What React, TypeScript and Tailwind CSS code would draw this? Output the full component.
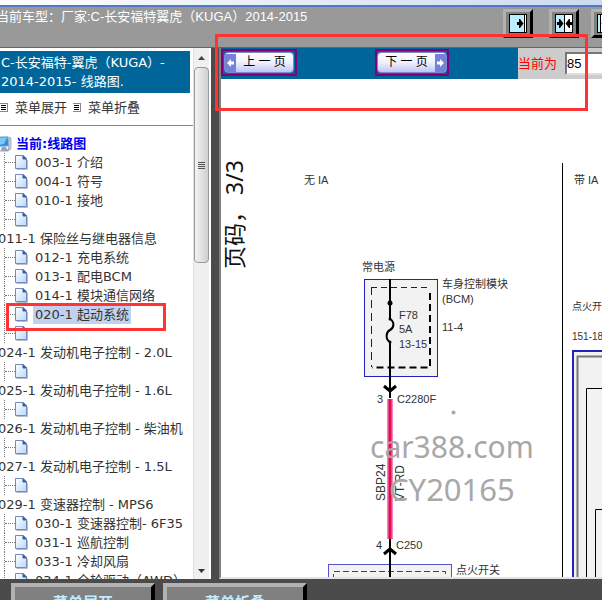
import { useState } from 'react';

interface TreeRow {
  id: string;
  kind: 'page' | 'group';
  label: string;
}

const rows: TreeRow[] = [
  { id: 'p003', kind: 'page', label: '003-1 介绍' },
  { id: 'p004', kind: 'page', label: '004-1 符号' },
  { id: 'p010', kind: 'page', label: '010-1 接地' },
  { id: 'e1', kind: 'page', label: '' },
  { id: 'g011', kind: 'group', label: '011-1 保险丝与继电器信息' },
  { id: 'p012', kind: 'page', label: '012-1 充电系统' },
  { id: 'p013', kind: 'page', label: '013-1 配电BCM' },
  { id: 'p014', kind: 'page', label: '014-1 模块通信网络' },
  { id: 'p020', kind: 'page', label: '020-1 起动系统' },
  { id: 'e2', kind: 'page', label: '' },
  { id: 'g024', kind: 'group', label: '024-1 发动机电子控制 - 2.0L' },
  { id: 'e3', kind: 'page', label: '' },
  { id: 'g025', kind: 'group', label: '025-1 发动机电子控制 - 1.6L' },
  { id: 'e4', kind: 'page', label: '' },
  { id: 'g026', kind: 'group', label: '026-1 发动机电子控制 - 柴油机' },
  { id: 'e5', kind: 'page', label: '' },
  { id: 'g027', kind: 'group', label: '027-1 发动机电子控制 - 1.5L' },
  { id: 'e6', kind: 'page', label: '' },
  { id: 'g029', kind: 'group', label: '029-1 变速器控制 - MPS6' },
  { id: 'p030', kind: 'page', label: '030-1 变速器控制- 6F35' },
  { id: 'p031', kind: 'page', label: '031-1 巡航控制' },
  { id: 'p033', kind: 'page', label: '033-1 冷却风扇' },
  { id: 'p034', kind: 'page', label: '034-1 全轮驱动（AWD）' },
];

function PageIcon() {
  return (
    <svg width="13" height="15" viewBox="0 0 13 15" className="shrink-0">
      <defs>
        <linearGradient id="paper" x1="0" y1="0" x2="1" y2="1">
          <stop offset="0" stopColor="#ffffff" />
          <stop offset="1" stopColor="#b9d8fb" />
        </linearGradient>
      </defs>
      <path d="M1.5 14.5H12.500V5" fill="none" stroke="#b8bcc8" />
      <path d="M0.500 0.500H8L11.500 4V13.500H0.500Z" fill="url(#paper)" stroke="#7189bd" />
      <path d="M8 0.500V4H11.500Z" fill="#3d5f9e" stroke="#3d5f9e" />
    </svg>
  );
}

function ComputerIcon() {
  return (
    <svg width="12" height="16" viewBox="0 0 12 16" className="shrink-0">
      <path d="M-2 1L8 0.500L9 10L-2 11Z" fill="#2f8fe0" stroke="#a8c4e0" />
      <path d="M-2 2L7 1.500L4 8L-2 9Z" fill="#7cc8fa" />
      <path d="M9 1L11 2V13L8.500 14V10Z" fill="#c5ccd8" stroke="#8c97ab" strokeWidth="0.6" />
      <path d="M2 11H6L7 13L10 13.500L8 15.500H0Z" fill="#9aa6b8" />
    </svg>
  );
}

function MenuMark() {
  return (
    <svg width="8" height="9" viewBox="1 0 8 9" className="shrink-0">
      <rect x="0.500" y="0.500" width="8" height="8" fill="#fff" stroke="#888" />
      <path d="M2 2.500H7M2 4.500H7M2 6.500H7" stroke="#000" />
    </svg>
  );
}

function PaneIcon({ kind }: { kind: 'right' | 'both' | 'left' }) {
  return (
    <svg width="18" height="19" viewBox="0 0 18 19" className="shrink-0">
      <rect x="0.500" y="0.500" width="17" height="18" fill="#fff" stroke="#000" />
      {kind === 'right' && (
        <>
          <rect x="1" y="1" width="14" height="17" fill="#bdeeff" />
          <path d="M15.500 1V18" stroke="#000" />
          <path d="M8 8H10V5H11L14.500 9.500L11 14H10V11H8Z" fill="#000" />
        </>
      )}
      {kind === 'both' && (
        <>
          <rect x="1" y="1" width="8" height="17" fill="#bdeeff" />
          <path d="M9.500 1V18" stroke="#000" />
          <path d="M2 8H4V5H5L8.500 9.500L5 14H4V11H2ZM17 8H15V5H14L10.500 9.500L14 14H15V11H17Z" fill="#000" />
        </>
      )}
      {kind === 'left' && (
        <>
          <rect x="1" y="1" width="2" height="17" fill="#bdeeff" />
          <path d="M3.500 1V18" stroke="#000" />
          <path d="M11 8H9V5H8L4.500 9.500L8 14H9V11H11Z" fill="#000" />
        </>
      )}
    </svg>
  );
}

function PaneButton({ kind, label }: { kind: 'right' | 'both' | 'left'; label: string }) {
  return (
    <button
      aria-label={label}
      className="flex h-[29px] w-[30px] shrink-0 items-center justify-center border-[3px] border-t-[#b2b2b2] border-r-black border-b-black border-l-[#b2b2b2] bg-[#808080]"
    >
      <PaneIcon kind={kind} />
    </button>
  );
}

function Arrow({ flip }: { flip?: boolean }) {
  return (
    <svg width="11" height="18" viewBox="0 0 11 18" className="shrink-0 bg-[#7480dc]">
      <path
        d={flip ? 'M2 7.500H5V5L9 9L5 13V10.500H2Z' : 'M9 7.500H6V5L2 9L6 13V10.500H9Z'}
        fill="#fff"
      />
    </svg>
  );
}

const pagerFace =
  'flex h-[21px] w-[70px] items-center overflow-hidden rounded-sm border border-[#8088cc] bg-gradient-to-b from-white via-[#eef0ff] to-[#c0c6f4]';

function Wiring() {
  return (
    <svg
      viewBox="221 79 381 498"
      preserveAspectRatio="xMinYMin slice"
      className="h-full w-full font-['Liberation_Sans','Noto_Sans_CJK_SC',sans-serif] text-[11px]"
      fill="#333"
    >
      <text transform="translate(243 269) rotate(-90)" fontSize="23" fill="#111" className="font-['Liberation_Serif','Noto_Sans_CJK_SC',serif]">
        页码，
      </text>
      <text transform="translate(243 195) rotate(-90)" fontSize="23" fill="#111" className="font-['Noto_Sans',sans-serif]">
        3/3
      </text>
      <text x="304" y="184">无 IA</text>
      <text x="574" y="184">带 IA</text>
      <path d="M562.500 163V577" stroke="#000" />

      {/* body control module */}
      <text x="362" y="271">常电源</text>
      <rect x="364.500" y="279.500" width="73" height="97" fill="#f2f2f2" stroke="#2222bb" />
      <path d="M371.500 287V367" stroke="#222" strokeDasharray="8 5" />
      <path d="M371 287.500H430" stroke="#222" strokeDasharray="6 4" />
      <path d="M430 293V367.500H372" fill="none" stroke="#000" strokeWidth="2" strokeDasharray="7 4" />
      <path d="M390 279V319C395 322 394 328 390 330C386 332 385 339 390 342V398" fill="none" stroke="#000" strokeWidth="2" />
      <circle cx="390" cy="303" r="2.500" fill="#000" />
      <circle cx="390" cy="319" r="1.500" fill="#000" />
      <circle cx="390" cy="342" r="1.500" fill="#000" />
      <text x="399" y="319">F78</text>
      <text x="399" y="333">5A</text>
      <text x="399" y="348">13-15</text>
      <text x="442" y="288">车身控制模块</text>
      <text x="442" y="303">(BCM)</text>
      <text x="442" y="331">11-4</text>
      <path d="M384 386L390 391L396 386" fill="none" stroke="#000" strokeWidth="3" />
      <text x="377" y="403">3</text>
      <text x="397" y="403">C2280F</text>

      {/* feed wire */}
      <path d="M390 399V539" stroke="#f77fc8" strokeWidth="6" />
      <path d="M390 399V539" stroke="#dd1144" strokeWidth="3" />
      <text transform="translate(385 501) rotate(-90)" fontSize="12">
        SBP24
      </text>
      <text transform="translate(404 501) rotate(-90)" fontSize="12">
        VT-RD
      </text>

      {/* ignition switch */}
      <text x="376" y="549">4</text>
      <text x="396" y="549">C250</text>
      <rect x="328.500" y="564.500" width="123" height="30" fill="#f2f2f2" stroke="#5555cc" />
      <path d="M333.500 580V571.500H445.500V580" fill="none" stroke="#444" strokeDasharray="6 3" />
      <path d="M390 539V577" stroke="#000" strokeWidth="2" />
      <path d="M384 554L390 549L396 554" fill="none" stroke="#000" strokeWidth="3" />
      <text x="456" y="574">点火开关</text>

      {/* variant with IA */}
      <text x="572" y="310" fontSize="10">点火开</text>
      <text x="572" y="340" fontSize="10">151-18</text>
      <rect x="573" y="351" width="80" height="260" fill="#f2f2f2" stroke="#2222bb" strokeWidth="2" />
      <path d="M577.500 600V356.500H610" fill="none" stroke="#777" strokeWidth="2" />
      <path d="M586.500 600V388.500H610" fill="none" stroke="#000" />
      <path d="M595.500 600V509.500H610" fill="none" stroke="#000" />

      <g fill="#a8a8a8" className="font-['Noto_Sans',sans-serif]">
        <circle cx="453.500" cy="412.500" r="2" />
        <text x="370" y="458" fontSize="30">car388.com</text>
        <text x="389" y="501" fontSize="31">CY20165</text>
      </g>
    </svg>
  );
}

function App() {
  const [selected, setSelected] = useState('p020');
  const [page, setPage] = useState('85');

  return (
    <div
      lang="zh-CN"
      className="relative flex h-screen flex-col overflow-hidden bg-[#4b4b4b] font-['DejaVu_Sans','Noto_Sans_CJK_SC',sans-serif] text-[13px] leading-[19px] text-[#333]"
    >
      <div className="h-[7px] shrink-0 border-b-2 border-[#5478c8] bg-gradient-to-r from-white to-[#cddaf0]" />
      <header className="flex h-[41px] shrink-0 border-b border-[#666] bg-[#999] font-['Liberation_Sans','Noto_Sans_CJK_SC',sans-serif] text-white">
        <h1 className="-ml-1 whitespace-nowrap">当前车型：厂家:C-长安福特翼虎（KUGA）2014-2015</h1>
        <div className="-mr-[19px] ml-auto flex shrink-0 pt-0.5">
          <PaneButton kind="right" label="隐藏菜单" />
          <div className="w-4 shrink-0" />
          <PaneButton kind="both" label="并排显示" />
          <div className="w-3 shrink-0" />
          <PaneButton kind="left" label="显示菜单" />
        </div>
      </header>

      <div className="flex min-h-0 flex-1">
        <aside className="flex w-[211px] shrink-0 bg-white pr-0.5">
          <div className="min-w-0 flex-1 overflow-hidden pt-[3px]">
            <h2 className="mr-[3px] bg-[#006699] px-px py-0.5 text-white">
              C-长安福特-翼虎（KUGA）- 2014-2015- 线路图.
            </h2>
            <div className="flex h-[33px] items-center border-b border-[#888] pb-1">
              <button className="flex items-center gap-[7px]">
                <MenuMark />
                菜单展开
              </button>
              <button className="ml-1.5 flex items-center gap-[7px]">
                <MenuMark />
                菜单折叠
              </button>
            </div>
            <div className="flex items-center gap-1 pt-2 font-bold text-[#0000ee]">
              <ComputerIcon />
              当前:线路图
            </div>
            <ul>
              {rows.map((row) =>
                row.kind === 'group' ? (
                  <li key={row.id} className="-ml-0.5 h-[19px] whitespace-nowrap">
                    <button>{row.label}</button>
                  </li>
                ) : (
                  <li key={row.id} className="relative ml-1 flex h-[19px] items-center border-l border-dotted border-[#777] whitespace-nowrap">
                    <span className="w-2.5 border-t border-dotted border-[#777]" />
                    <PageIcon />
                    {row.label && (
                      <button
                        onClick={() => setSelected(row.id)}
                        className={row.id === selected ? 'ml-[5px] bg-[#c1d2ee] px-0.5' : 'ml-[5px] px-0.5'}
                      >
                        {row.label}
                      </button>
                    )}
                    {row.id === 'p020' && (
                      <span className="pointer-events-none absolute -top-0.5 left-px z-10 h-7 w-40 border-[3px] border-[#ff3333]" />
                    )}
                  </li>
                )
              )}
            </ul>
          </div>
          <div className="flex w-4 shrink-0 flex-col border-l border-[#e0e0e0] bg-[#f0f0f0]">
            <div className="flex h-[19px] shrink-0 items-center justify-center">
              <svg width="7" height="4" viewBox="0 0 7 4">
                <path d="M0 4L3.500 0L7 4Z" fill="#444" />
              </svg>
            </div>
            <div className="flex h-[196px] shrink-0 items-center justify-center rounded-sm border border-[#999] bg-gradient-to-r from-[#f4f4f4] to-[#cfcfd2]">
              <svg width="7" height="9" viewBox="0 0 7 9">
                <path d="M0 1.500H7M0 3.500H7M0 5.500H7M0 7.500H7" stroke="#555" />
              </svg>
            </div>
            <div className="mt-auto flex h-[17px] shrink-0 items-center justify-center">
              <svg width="7" height="4" viewBox="0 0 7 4">
                <path d="M0 0L3.500 4L7 0Z" fill="#333" />
              </svg>
            </div>
          </div>
        </aside>

        <main className="ml-2 flex min-w-0 flex-1 flex-col border-b-2 border-l-2 border-b-[#e3e3e3] border-l-[#808080] bg-white">
          <div className="flex h-[31px] shrink-0">
            <div className="flex flex-1 justify-between bg-[#006699] pt-px pr-[69px] font-['Liberation_Sans','Noto_Sans_CJK_SC',sans-serif] text-[12px] text-black">
              <button className="flex h-[27px] items-center border-2 border-[#800080] px-px">
                <span className={pagerFace}>
                  <Arrow />
                  <span className="flex-1">上 一 页</span>
                </span>
              </button>
              <button className="flex h-[27px] items-center border-2 border-[#800080]">
                <span className={pagerFace}>
                  <span className="flex-1">下 一 页</span>
                  <Arrow flip />
                </span>
              </button>
            </div>
            <label className="flex w-[84px] shrink-0 items-center gap-2 overflow-hidden bg-[#ccc] font-['Liberation_Sans','Noto_Sans_CJK_SC',sans-serif] whitespace-nowrap text-[#ff0000]">
              当前为
              <input
                value={page}
                onChange={(e) => setPage(e.target.value)}
                className="h-[23px] w-14 shrink-0 border-2 border-t-[#777] border-r-[#ddd] border-b-[#ddd] border-l-[#777] bg-white text-black"
              />
            </label>
          </div>
          <div className="min-h-0 flex-1 overflow-hidden">
            <Wiring />
          </div>
        </main>
      </div>

      <footer className="flex h-[21px] shrink-0 items-start gap-2 pt-1 pl-[11px] text-[15px] font-bold text-[#bdeeff]">
        <button className="h-10 w-36 shrink-0 border-4 border-t-[#b2b2b2] border-r-black border-b-black border-l-[#b2b2b2] bg-[#808080]">
          菜单展开
        </button>
        <button className="h-10 w-36 shrink-0 border-4 border-t-[#b2b2b2] border-r-black border-b-black border-l-[#b2b2b2] bg-[#808080]">
          菜单折叠
        </button>
      </footer>

      {/* highlight over the pager */}
      <div className="pointer-events-none absolute top-[34px] right-[14px] left-[215px] h-[77px] border-[3px] border-[#ff3333]" />
    </div>
  );
}

export default App;
